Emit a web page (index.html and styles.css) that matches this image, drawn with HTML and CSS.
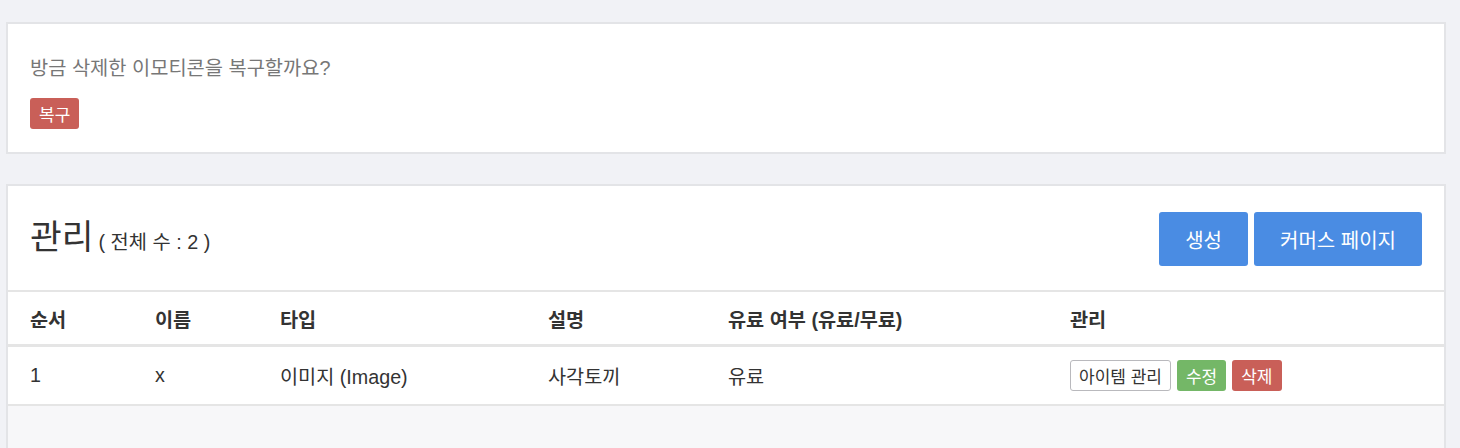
FILE: index.html
```html
<!DOCTYPE html>
<html lang="ko">
<head>
<meta charset="utf-8">
<title>관리</title>
<link rel="stylesheet" href="styles.css">
</head>
<body>
<section class="card notice">
  <p class="notice-text">방금 삭제한 이모티콘을 복구할까요?</p>
  <button class="btn btn-red btn-sm">복구</button>
</section>

<section class="card panel">
  <header class="panel-head">
    <h1 class="title">관리<small>( 전체 수 : 2 )</small></h1>
    <div class="actions">
      <button class="btn btn-blue btn-lg">생성</button>
      <button class="btn btn-blue btn-lg">커머스 페이지</button>
    </div>
  </header>
  <table class="grid">
    <colgroup>
      <col class="c1"><col class="c2"><col class="c3"><col class="c4"><col class="c5"><col>
    </colgroup>
    <thead>
      <tr><th>순서</th><th>이름</th><th>타입</th><th>설명</th><th>유료 여부 (유료/무료)</th><th>관리</th></tr>
    </thead>
    <tbody>
      <tr>
        <td>1</td><td>x</td><td>이미지 (Image)</td><td>사각토끼</td><td>유료</td>
        <td class="ops">
          <button class="btn btn-line btn-sm">아이템 관리</button>
          <button class="btn btn-green btn-sm">수정</button>
          <button class="btn btn-red btn-sm">삭제</button>
        </td>
      </tr>
    </tbody>
  </table>
  <div class="panel-foot"></div>
</section>
</body>
</html>
```

FILE: styles.css
```css
html, body {
  margin: 0;
  padding: 0;
}
body {
  background: #f1f2f6;
  font-family: "Liberation Sans", "Noto Sans CJK KR", sans-serif;
  color: #333;
  padding-top: 22px;
}
.card {
  background: #fff;
  border: 2px solid #e3e4e7;
  margin: 0 14px 0 6px;
}
.notice {
  padding: 32px 22px 23px;
}
.notice-text {
  margin: 0;
  font-size: 19.8px;
  line-height: 24px;
  color: #777;
}
.notice .btn {
  margin-top: 18px;
}
.btn {
  font-family: inherit;
  border: 0;
  border-radius: 3px;
  color: #fff;
  cursor: pointer;
  display: inline-flex;
  align-items: center;
  justify-content: center;
  white-space: nowrap;
}
.btn-sm {
  height: 31px;
  padding: 0 9px;
  font-size: 17px;
}
.btn-lg {
  height: 54px;
  padding: 0 26px;
  font-size: 20px;
}
.btn-red { background: #c95f58; }
.btn-green { background: #74b767; }
.btn-blue { background: #4a8ce3; }
.btn-line {
  background: #fff;
  color: #333;
  border: 1px solid #b9b9bd;
  padding: 0 8px;
}
.panel {
  margin-top: 30px;
}
.panel-head {
  display: flex;
  align-items: center;
  justify-content: space-between;
  padding: 26px 22px 24px;
  border-bottom: 2px solid #e5e5e5;
}
.title {
  margin: 0;
  font-size: 34.5px;
  font-weight: 400;
  line-height: 40px;
  color: #333;
}
.title small {
  font-size: 19.8px;
  color: #333;
  margin-left: 5px;
}
.actions {
  display: flex;
  gap: 6px;
}
.grid {
  width: 100%;
  border-collapse: collapse;
  table-layout: fixed;
}
.c1 { width: 125px; }
.c2 { width: 125px; }
.c3 { width: 268px; }
.c4 { width: 180px; }
.c5 { width: 342px; }
.grid th, .grid td {
  text-align: left;
  padding: 0 22px;
  font-size: 19.7px;
  color: #333;
}
.grid th {
  height: 52px;
  font-weight: 700;
  border-bottom: 3px solid #e5e5e5;
}
.grid td {
  height: 57px;
  border-bottom: 2px solid #e5e5e5;
}
.grid td.ops {
  white-space: nowrap;
  font-size: 0;
}
.ops .btn + .btn {
  margin-left: 6px;
}
.panel-foot {
  background: #f7f7f9;
  height: 60px;
}
```
